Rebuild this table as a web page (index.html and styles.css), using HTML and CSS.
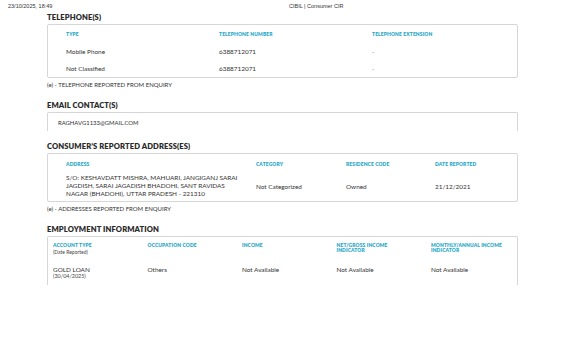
FILE: index.html
```html
<!DOCTYPE html>
<html>
<head>
<meta charset="utf-8">
<link rel="stylesheet" href="styles.css">
</head>
<body>
<div class="topbar">
  <span class="stamp">23/10/2025, 18:49</span>
  <span class="title">CIBIL | Consumer CIR</span>
</div>
<main class="content">
  <h2 class="heading">TELEPHONE(S)</h2>
  <div class="box tel">
    <div class="row head"><span>TYPE</span><span>TELEPHONE NUMBER</span><span>TELEPHONE EXTENSION</span></div>
    <div class="row"><span>Mobile Phone</span><span>6388712071</span><span class="dash">-</span></div>
    <div class="row"><span>Not Classified</span><span>6388712071</span><span class="dash">-</span></div>
  </div>
  <p class="note">(e) - TELEPHONE REPORTED FROM ENQUIRY</p>

  <h2 class="heading gap">EMAIL CONTACT(S)</h2>
  <div class="box open email"><span>RAGHAVG1133@GMAIL.COM</span></div>

  <h2 class="heading gap">CONSUMER’S REPORTED ADDRESS(ES)</h2>
  <div class="box addr">
    <div class="row head"><span>ADDRESS</span><span>CATEGORY</span><span>RESIDENCE CODE</span><span>DATE REPORTED</span></div>
    <div class="row body"><span class="address">S/O: KESHAVDATT MISHRA, MAHUARI, JANGIGANJ SARAI JAGDISH, SARAI JAGADISH BHADOHI, SANT RAVIDAS NAGAR (BHADOHI), UTTAR PRADESH - 221310</span><span>Not Categorized</span><span>Owned</span><span>21/12/2021</span></div>
  </div>
  <p class="note">(e) - ADDRESSES REPORTED FROM ENQUIRY</p>

  <h2 class="heading gap2">EMPLOYMENT INFORMATION</h2>
  <div class="box open emp">
    <div class="row head"><span>ACCOUNT TYPE<small>(Date Reported)</small></span><span>OCCUPATION CODE</span><span>INCOME</span><span>NET/GROSS INCOME INDICATOR</span><span>MONTHLY/ANNUAL INCOME INDICATOR</span></div>
    <div class="row body"><span>GOLD LOAN<small>(30/04/2025)</small></span><span>Others</span><span>Not Available</span><span>Not Available</span><span>Not Available</span></div>
  </div>
</main>
</body>
</html>
```
FILE: styles.css
```css
* { box-sizing: border-box; }
html, body { margin: 0; padding: 0; background: #fff; }
body { font-family: "Liberation Sans", Arial, sans-serif; color: #333; width: 566px; height: 346px; overflow: hidden; }

.topbar { display: flex; height: 12px; padding-top: 3px; font-size: 5.5px; line-height: 6px; color: #333; }
.stamp { margin-left: 8px; width: 281px; }

.content { margin-left: 47px; width: 471px; font-family: "Lato", "Liberation Sans", sans-serif; }

.heading { margin: 0 0 2px; font-size: 7.6px; line-height: 10px; font-weight: 800; color: #2b2b2b; letter-spacing: 0.1px; }
.gap { margin-top: 10px; }
.gap2 { margin-top: 10px; }

.box { border: 1px solid #d6d6d6; border-radius: 2px; }
.box.open { border-bottom: none; border-radius: 2px 2px 0 0; }

.row { display: flex; align-items: center; font-size: 6.4px; color: #333; }
.row span { flex: none; }
.row.head span { font-size: 4.9px; font-weight: 800; color: #27a7c8; letter-spacing: 0.15px; }

.tel { padding-left: 18px; }
.tel .row { height: 17px; }
.tel .row.head { height: 18px; }
.tel .row span { width: 153px; }
.dash { color: #777; }

.note { margin: 2px 0 0; font-size: 6px; line-height: 10px; color: #333; }

.email { height: 19px; padding-left: 10px; display: flex; align-items: center; font-size: 5.9px; }

.addr { padding-left: 18px; }
.addr .row.head { height: 19px; padding-top: 1px; }
.addr .row.body { height: 28px; padding-bottom: 2px; }
.addr .row span:nth-child(1) { width: 190px; }
.addr .row span:nth-child(2) { width: 90px; }
.addr .row span:nth-child(3) { width: 89px; }
.address { padding-right: 16px; line-height: 8px; }

.emp { padding-left: 5px; height: 49px; }
.emp .row { align-items: flex-start; }
.emp .row span { width: 94.5px; line-height: 5px; }
.emp .row.head { height: 24px; padding-top: 6px; }
.emp .row.head span { line-height: 5px; padding-right: 22px; }
.emp .row.body { padding-top: 5px; }
.emp .row.body span { line-height: 7px; }
small { display: block; font-size: 5.4px; font-weight: 400; color: #444; letter-spacing: 0; }
.emp .row.head small { margin-top: 1px; line-height: 6px; font-size: 5px; color: #444; font-weight: 400; letter-spacing: 0; }
.emp .row.body small { line-height: 6px; }
```
